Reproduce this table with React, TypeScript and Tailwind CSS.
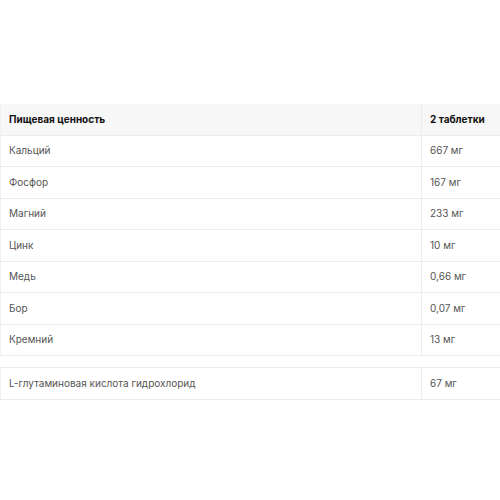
import React from 'react';

type Row = { name: string; value: string };

const rows: Row[] = [
  { name: 'Кальций', value: '667 мг' },
  { name: 'Фосфор', value: '167 мг' },
  { name: 'Магний', value: '233 мг' },
  { name: 'Цинк', value: '10 мг' },
  { name: 'Медь', value: '0,66 мг' },
  { name: 'Бор', value: '0,07 мг' },
  { name: 'Кремний', value: '13 мг' },
];

const extra: Row[] = [{ name: 'L-глутаминовая кислота гидрохлорид', value: '67 мг' }];

const Cell: React.FC<{ children: React.ReactNode; right?: boolean; head?: boolean }> = ({ children, right, head }) => (
  <div
    className={
      right
        ? 'w-[79px] pl-2 flex items-center border-l border-[#ececec]'
        : 'flex-1 pl-2 flex items-center'
    }
  >
    <span className={head ? 'font-bold text-[#111]' : 'text-[#555]'}>{children}</span>
  </div>
);

const NutritionTable: React.FC<{ items: Row[]; header?: boolean }> = ({ items, header }) => (
  <div className="border-l border-[#f0f0f0]">
    {header && (
      <div className="flex h-[31.5px] bg-[#f7f7f7] border-b border-[#ececec]">
        <Cell head>Пищевая ценность</Cell>
        <Cell head right>
          2 таблетки
        </Cell>
      </div>
    )}
    {items.map((r) => (
      <div key={r.name} className="flex h-[31.5px] border-b border-[#ececec]">
        <Cell>{r.name}</Cell>
        <Cell right>{r.value}</Cell>
      </div>
    ))}
  </div>
);

const App: React.FC = () => {
  return (
    <div className="w-[500px] h-[500px] bg-white pt-[104px] text-[10px]" style={{ fontFamily: 'Inter, "Noto Sans", sans-serif' }}>
      <NutritionTable items={rows} header />
      <div className="h-[11px]" />
      <div className="border-t border-[#ececec]">
        <NutritionTable items={extra} />
      </div>
    </div>
  );
};

export default App;
